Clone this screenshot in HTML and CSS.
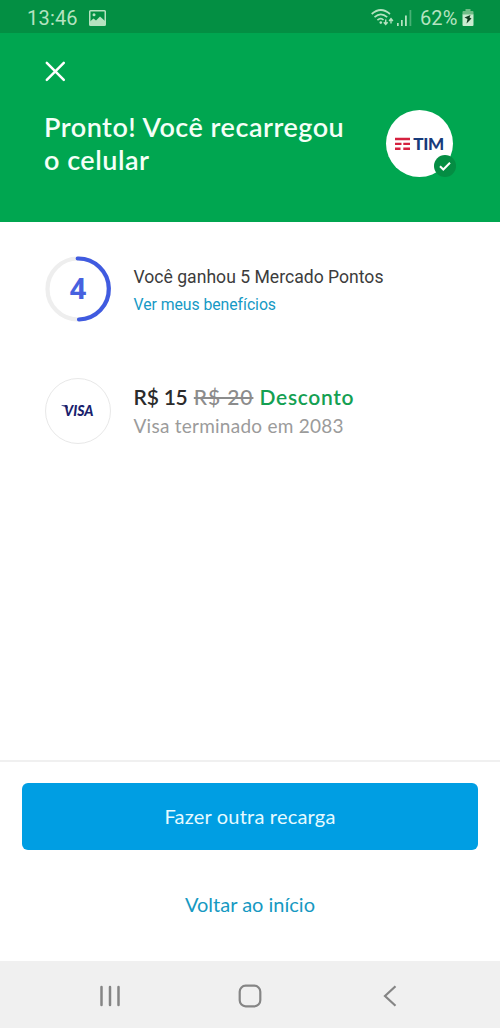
FILE: index.html
```html
<!DOCTYPE html>
<html lang="pt-BR">
<head>
<meta charset="utf-8">
<title>Recarga de celular</title>
<link rel="stylesheet" href="styles.css">
</head>
<body>
<main class="screen">
  <div class="status">
    <span class="time">13:46</span>
    <svg class="gallery" width="17" height="16" viewBox="0 0 17 16"><path fill="#b5e3c0" fill-rule="evenodd" d="M1.500 0h14Q17 0 17 1.500v13Q17 16 15.500 16h-14Q0 16 0 14.500v-13Q0 0 1.500 0zM1.500 1.500v13h14v-13z"/><path fill="#b5e3c0" d="M1 11.500 4.500 8.500 7 10.500 11 6.500 16 11V15H1z"/><circle cx="5" cy="4.800" r="1.500" fill="#b5e3c0"/></svg>
    <svg class="wifi" width="23" height="18" viewBox="0 0 23 18" fill="none" stroke="#b5e3c0" stroke-width="1.700"><path d="M.7 5Q9.800-3 19 5M3.500 8.200Q9.800 2.600 16.200 8.200M6.400 11.200Q9.800 8.300 12.500 11"/><circle cx="9.800" cy="13.600" r="1.300" fill="#b5e3c0" stroke="none"/><path stroke-width="1.400" d="M14.700 10.500v5M12.800 13.200l1.900 2.300 1.900-2.300M20 14.500V9.800M18.100 12l1.900-2.300 1.900 2.300"/></svg>
    <svg class="signal" width="15" height="16" viewBox="0 0 15 16" fill="#b5e3c0"><path d="M0 13h1.700v3H0zM4 10h1.700v6H4zM8 5.500h1.800V16H8z"/><path opacity=".4" d="M12.500 0h1.800v16h-1.800z"/></svg>
    <span class="percent">62%</span>
    <svg class="battery" width="12" height="17" viewBox="0 0 12 17"><path fill="#6fbd87" d="M3.500 0h5v2h2q1 0 1 1v3H.5V3q0-1 1-1h2z"/><path fill="#c9ecd0" d="M.5 5.500h11V16q0 1-1 1h-9q-1 0-1-1z"/><path fill="#123c22" d="M8.500 6 2.500 8.500 5.500 10 4.500 14.500l5-5-2-1z"/></svg>
  </div>
  <header class="header">
    <svg class="close" width="20" height="20" viewBox="0 0 20 20"><path d="m1.800 1.800 17 17m0-17-17 17" stroke="#fff" stroke-width="2.500" stroke-linecap="round"/></svg>
    <div class="summary">
      <h1 class="title">Pronto! Você recarregou<br>o celular</h1>
      <div class="carrier">
        <svg class="stripes" width="15" height="14" viewBox="0 0 15 14" fill="#d5213f"><path d="M0 .8h15v2.400H0zM0 5.700h6.500V8H0zM8.300 5.700H15V8H8.300zM0 10.600h5.500V13H0zM8.300 10.600H15V13H8.300z"/></svg>
        <span class="tim">TIM</span>
        <svg class="badge" width="22" height="22" viewBox="0 0 22 22"><circle cx="11" cy="11" r="11" fill="#048d43"/><path d="m6 11.300 3.300 3.200L16 7.700" fill="none" stroke="#fff" stroke-width="2"/></svg>
      </div>
    </div>
  </header>
  <section class="content">
    <div class="row points">
      <svg width="66" height="66" viewBox="0 0 66 66" fill="none" stroke-width="4.200" stroke-linecap="round"><circle cx="33" cy="33" r="30.500" stroke="#eee"/><path d="M32.700 2.500a30.500 30.500 0 0 1 1.300 61" stroke="#405be0"/><text x="33" y="43" class="level">4</text></svg>
      <div class="points-copy">
        <p class="earned">Você ganhou 5 Mercado Pontos</p>
        <a class="benefits">Ver meus benefícios</a>
      </div>
    </div>
    <div class="row payment">
      <div class="card"><svg class="visa-logo" width="36" height="24" viewBox="0 0 36 24"><text x="4" y="17" class="visa" textLength="29.500" lengthAdjust="spacingAndGlyphs">VISA</text><path fill="#1a1f6e" d="M1.500 6.300h5.800l.8 3.500Q5.500 7.200 1.500 6.800z"/></svg></div>
      <div class="payment-copy">
        <p class="price"><span class="now">R$ 15</span> <s>R$ 20</s> <span class="discount">Desconto</span></p>
        <p class="ending">Visa terminado em 2083</p>
      </div>
    </div>
  </section>
  <footer class="actions">
    <button class="primary">Fazer outra recarga</button>
    <a class="home">Voltar ao início</a>
  </footer>
  <nav class="nav">
    <svg width="22" height="22" viewBox="0 0 22 22" stroke="#858585" stroke-width="2.500" stroke-linecap="round"><path d="M2.500 2v18M11 2v18M19.500 2v18"/></svg>
    <svg width="24" height="24" viewBox="0 0 24 24" fill="none" stroke="#858585" stroke-width="2.200"><rect x="1.700" y="1.700" width="20.600" height="20.600" rx="6"/></svg>
    <svg class="back" width="14" height="22" viewBox="0 0 14 22" fill="none" stroke="#858585" stroke-width="2.200"><path d="M12.500 1.300 2 11l10.500 9.700"/></svg>
  </nav>
</main>
</body>
</html>
```
FILE: styles.css
```css
* { box-sizing: border-box; }
body, h1, p { margin: 0; }
svg { display: block; flex: none; overflow: visible; }
.screen { width: 500px; height: 1028px; display: flex; flex-direction: column; background: #fff; font-family: Lato, "Liberation Sans", sans-serif; white-space: nowrap; }
.status { height: 33px; display: flex; align-items: center; padding: 2px 26px 0 27px; background: #038f43; color: #b5e3c0; font: 20px Roboto, sans-serif; }
.time { width: 62px; letter-spacing: .2px; }
.wifi { margin-left: auto; }
.signal { margin: 0 8px 0 3px; }
.percent { width: 42px; letter-spacing: .1px; }
.header { height: 189px; padding: 28px 47px 0 45px; background: #00a650; }
.summary { display: flex; justify-content: space-between; margin-top: 29px; }
.title { margin-left: -1px; color: #f4fff7; font-size: 27px; line-height: 33px; font-weight: 600; letter-spacing: .5px; }
.carrier { position: relative; width: 67px; height: 67px; margin-top: .4px; border-radius: 50%; background: #fff; display: flex; align-items: center; justify-content: center; gap: 3px; }
.stripes { margin-top: 1px; }
.badge { position: absolute; right: -2.500px; bottom: 0; }
.tim { font: 900 17px/24px Lato, sans-serif; color: #173b7b; letter-spacing: -.4px; }
.content { flex: 1; padding: 34px 45px 0; }
.row { display: flex; gap: 22.500px; height: 66px; }
.payment { margin-top: 56px; }
.level { font: bold 29px "Noto Sans", sans-serif; text-anchor: middle; fill: #4761df; stroke: none; }
.points-copy { padding-top: 7px; font-family: Roboto, sans-serif; }
.earned { font-size: 17.600px; line-height: 28px; color: #3c3c3c; }
.benefits { display: block; font-size: 15.800px; line-height: 27px; letter-spacing: -.05px; color: #1699c5; }
.card { width: 66px; height: 66px; border: 1px solid #e8e8e8; border-radius: 50%; display: flex; align-items: center; justify-content: center; }
.visa { font: italic 900 15px Lato, sans-serif; fill: #1a1f6e; }
.payment-copy { padding-top: 4px; }
.price { font-size: 21px; line-height: 30px; font-weight: 500; letter-spacing: .9px; color: #8c8c8c; }
.now { color: #2b2b2b; font-weight: 600; letter-spacing: -.2px; }
.discount { color: #14a052; font-weight: 600; letter-spacing: .65px; }
.ending { font-size: 19px; line-height: 28px; letter-spacing: .25px; color: #9b9b9b; }
.actions { height: 201px; border-top: 2px solid #f0f0f0; padding: 21px 22px 0; display: flex; flex-direction: column; align-items: center; }
.primary { width: 456px; height: 67px; padding: 0 0 2px; border: 0; border-radius: 6px; background: #009ee3; color: #e6faff; font: 20px Lato, sans-serif; letter-spacing: .2px; }
.home { margin-top: 38px; font-size: 20px; line-height: 32px; color: #1699c2; }
.nav { height: 67px; background: #f0f0f0; display: grid; grid-template-columns: 127px 139px 1fr; align-items: center; justify-items: start; padding: 3px 103px 0 99px; }
.nav svg:nth-child(2) { margin-left: 11.500px; }
.back { justify-self: end; }
```
